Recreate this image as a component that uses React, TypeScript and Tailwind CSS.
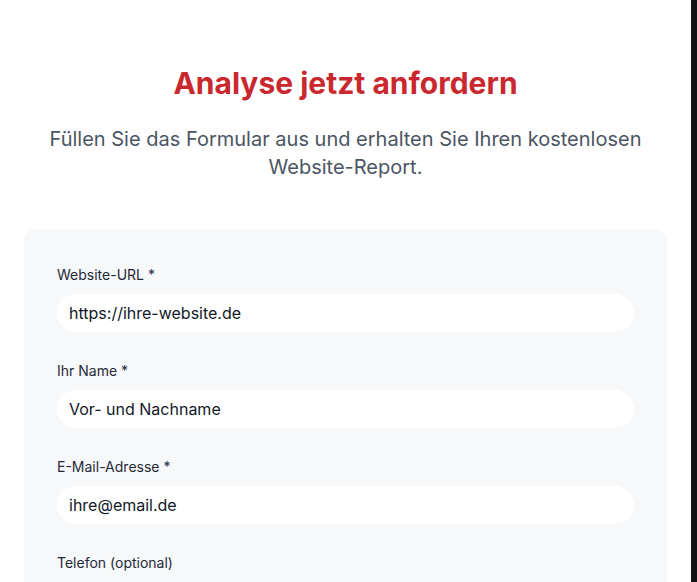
import React, { useState } from 'react';

const fields = [
  { name: 'url', label: 'Website-URL *', placeholder: 'https://ihre-website.de', type: 'url' },
  { name: 'name', label: 'Ihr Name *', placeholder: 'Vor- und Nachname', type: 'text' },
  { name: 'email', label: 'E-Mail-Adresse *', placeholder: 'ihre@email.de', type: 'email' },
  { name: 'phone', label: 'Telefon (optional)', placeholder: '+49 123 456789', type: 'tel' },
];

const App: React.FC = () => {
  const [formData, setFormData] = useState<Record<string, string>>({});

  const handleChange = (e: React.ChangeEvent<HTMLInputElement>) => {
    setFormData({ ...formData, [e.target.name]: e.target.value });
  };

  return (
    <div className="flex min-h-screen bg-white font-['Inter',sans-serif]">
      <div className="flex-1 px-6 pt-[65px]">
        <div className="mx-auto max-w-3xl">
          <div className="mb-12 text-center">
            <h2 className="text-3xl font-bold text-[#c9292e]">Analyse jetzt anfordern</h2>
            <p className="mx-auto mt-6 max-w-[610px] text-xl leading-7 text-[#4b5563]">
              Füllen Sie das Formular aus und erhalten Sie Ihren kostenlosen Website-Report.
            </p>
          </div>

          <div className="rounded-xl bg-[#f7f8fa] px-[33px] pt-[36px] pb-8">
            <div className="flex flex-col gap-[29px]">
              {fields.map((f) => (
                <div key={f.name}>
                  <label className="mb-[9px] block text-sm font-normal text-[#1f2937]">{f.label}</label>
                  <input
                    name={f.name}
                    type={f.type}
                    value={formData[f.name] || ''}
                    onChange={handleChange}
                    placeholder={f.placeholder}
                    className="h-[38px] w-full rounded-full bg-white px-3 text-base text-[#111827] placeholder:text-[#111827] outline-none"
                  />
                </div>
              ))}
            </div>
          </div>
        </div>
      </div>
      <div className="w-[6px] shrink-0 bg-[#121215]" />
    </div>
  );
};

export default App;
